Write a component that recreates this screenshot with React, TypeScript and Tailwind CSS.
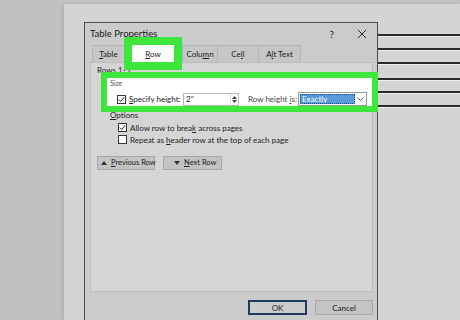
import React from 'react'

const font = { fontFamily: 'Lato, "Noto Sans", Arial, sans-serif' }

function Check({ checked }: { checked?: boolean }) {
  return (
    <div className="w-[9px] h-[9px] border border-[#333] bg-white flex items-center justify-center shrink-0">
      {checked && (
        <svg width="7" height="7" viewBox="0 0 7 7">
          <path d="M0.8 3.6 L2.7 5.5 L6.2 1.2" fill="none" stroke="#222" strokeWidth="1" />
        </svg>
      )}
    </div>
  )
}

function Tab({ label, u, w }: { label: string; u: number; w: number }) {
  return (
    <div
      className="h-[17px] flex items-center justify-center text-[8px] text-[#222] border-t border-l border-[#b5b5b5] bg-[#c6c6c6] whitespace-nowrap"
      style={{ width: w }}
    >
      <span>
        {label.slice(0, u)}
        <span className="underline">{label[u]}</span>
        {label.slice(u + 1)}
      </span>
    </div>
  )
}

const docLines = [12, 11, 11, 13, 10, 11]

export default function App() {
  return (
    <div className="w-[460px] h-[320px] bg-[#c1c1c1] pl-[64px] pt-[4px] overflow-hidden whitespace-nowrap" style={font}>
      <div className="h-full bg-[#d4d4d4] pl-[20px] pt-[18px] flex shadow-[-2px_0_3px_rgba(0,0,0,0.08)]">
        {/* dialog */}
        <div className="w-[294px] h-[320px] border border-[#4c4c4c] bg-[#cbcbcb] flex flex-col shrink-0">
          <div className="h-[22px] flex items-center pl-[5px] text-[#1a1a1a]">
            <span className="text-[9.5px]">Table Properties</span>
            <span className="ml-auto text-[10px] mr-[23px]">?</span>
            <svg width="10" height="10" viewBox="0 0 10 10" className="mr-[10px]">
              <path d="M1 1 L9 9 M9 1 L1 9" stroke="#222" strokeWidth="1" />
            </svg>
          </div>
          <div className="flex pl-[7px] relative z-10">
            <Tab label="Table" u={0} w={32} />
            <div className="w-[58px] h-[17px] relative">
              <div className="absolute left-0 right-0 -top-[8px] -bottom-[8px] border-[8px] border-[#3de63d] bg-white flex items-center justify-center text-[8px] text-[#222]">
                <span>
                  <span className="underline">R</span>ow
                </span>
              </div>
            </div>
            <Tab label="Column" u={4} w={35} />
            <Tab label="Cell" u={2} w={41} />
            <div className="border-r border-[#b5b5b5]">
              <Tab label="Alt Text" u={1} w={42} />
            </div>
          </div>
          <div className="ml-[5px] w-[283px] h-[230px] bg-[#d5d5d5] border border-[#bdbdbd] flex flex-col text-[8px] text-[#222]">
            <div className="pl-[6px] pt-[2px] h-[11px] leading-[11px]">Rows 1-5:</div>
            <div className="ml-[10px] -mr-[6px] -mt-[2px] h-[40px] border-[6px] border-[#3de63d] bg-white flex flex-col relative z-10">
              <div className="pl-[3px] pt-[1px] text-[7px] text-[#555] leading-[9px]">Size</div>
              <div className="flex items-center pl-[10px] mt-[4px]">
                <Check checked />
                <span className="ml-[3px] w-[54px]">
                  <span className="underline">S</span>pecify height:
                </span>
                <div className="w-[56px] h-[13px] border border-[#b8b8b8] bg-white flex items-center">
                  <span className="pl-[2px] flex-1">2"</span>
                  <div className="w-[8px] h-full flex flex-col items-center justify-center gap-[1px] border-l border-[#ddd]">
                    <svg width="5" height="3" viewBox="0 0 5 3"><path d="M0 3 L2.5 0 L5 3Z" fill="#444" /></svg>
                    <svg width="5" height="3" viewBox="0 0 5 3"><path d="M0 0 L2.5 3 L5 0Z" fill="#444" /></svg>
                  </div>
                </div>
                <span className="ml-[9px] w-[50px] text-[#444]">
                  Row height <span className="underline">i</span>s:
                </span>
                <div className="w-[69px] h-[14px] border border-[#9a9a9a] bg-white flex items-center p-[1px]">
                  <div className="w-[55px] h-full bg-[#5a9ad8] text-white flex items-center pl-[1px] border border-dotted border-[#1d4f86]">
                    Exactly
                  </div>
                  <div className="flex-1 flex items-center justify-center">
                    <svg width="7" height="4" viewBox="0 0 7 4">
                      <path d="M0.5 0.5 L3.5 3.5 L6.5 0.5" fill="none" stroke="#444" strokeWidth="0.9" />
                    </svg>
                  </div>
                </div>
              </div>
            </div>
            <div className="pl-[19px] -mt-[2px] leading-[10px]">
              <span className="underline">O</span>ptions
            </div>
            <div className="flex flex-col gap-[3px] pl-[27px] mt-[3px]">
              <div className="flex items-center gap-[3px] h-[9px]">
                <Check checked />
                <span>
                  Allow row to brea<span className="underline">k</span> across pages
                </span>
              </div>
              <div className="flex items-center gap-[3px] h-[9px]">
                <Check />
                <span>
                  Repeat as <span className="underline">h</span>eader row at the top of each page
                </span>
              </div>
            </div>
            <div className="flex gap-[8px] pl-[6px] mt-[12px] text-[7.5px]">
              <div className="w-[58px] h-[14px] bg-[#c3c3c3] border border-[#a8a8a8] flex items-center pl-[3px] gap-[4px]">
                <svg width="6" height="4" viewBox="0 0 6 4" className="shrink-0"><path d="M0 4 L3 0 L6 4Z" fill="#333" /></svg>
                <span>
                  <span className="underline">P</span>revious Row
                </span>
              </div>
              <div className="w-[59px] h-[14px] bg-[#c3c3c3] border border-[#a8a8a8] flex items-center pl-[10px] gap-[4px]">
                <svg width="6" height="4" viewBox="0 0 6 4" className="shrink-0"><path d="M0 0 L3 4 L6 0Z" fill="#333" /></svg>
                <span>
                  <span className="underline">N</span>ext Row
                </span>
              </div>
            </div>
          </div>
          <div className="flex justify-end gap-[8px] pr-[4px] mt-[8px] text-[8px] text-[#222]">
            <div className="w-[59px] h-[15px] bg-[#cdcdcd] border-2 border-[#213a5c] flex items-center justify-center">OK</div>
            <div className="w-[58px] h-[15px] bg-[#c4c4c4] border border-[#a8a8a8] flex items-center justify-center">Cancel</div>
          </div>
        </div>
        {/* document lines */}
        <div className="flex-1 flex flex-col pt-[12px]">
          {docLines.map((m, i) => (
            <div key={i} className="h-[2px] bg-[#2a2a2a] border-b border-[#eeeeee] box-content" style={{ marginTop: i === 0 ? 0 : m }} />
          ))}
        </div>
      </div>
    </div>
  )
}
